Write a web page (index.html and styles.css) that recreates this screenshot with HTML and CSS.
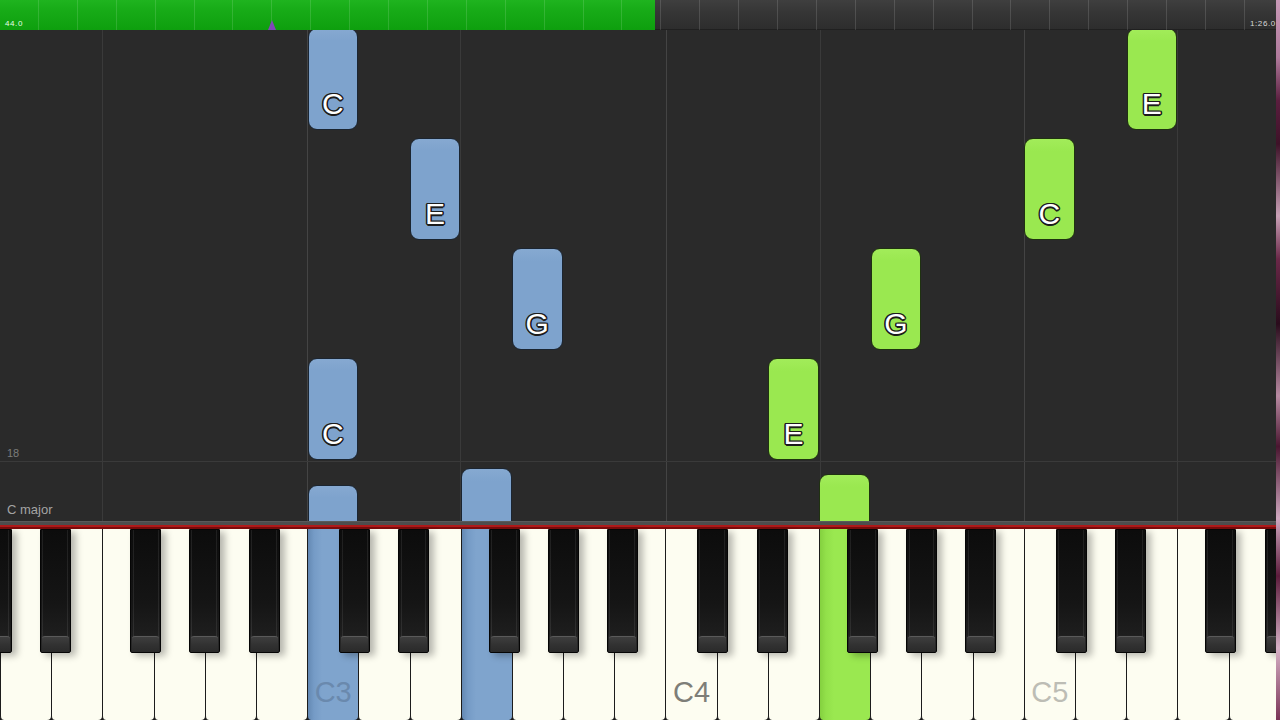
FILE: index.html
```html
<!DOCTYPE html>
<html lang="en">
<head>
<meta charset="utf-8">
<title>Piano roll</title>
<link rel="stylesheet" href="styles.css">
</head>
<body>
<div class="screen">
  <header class="timeline">
    <div class="progress"></div>
    <div class="rest"></div>
    <span class="time time-start">44.0</span>
    <span class="time time-end">1:26.0</span>
    <span class="marker"></span>
  </header>

  <main class="roll">
    <span class="vline" style="left:102px"></span>
    <span class="vline strong" style="left:307px"></span>
    <span class="vline" style="left:460px"></span>
    <span class="vline strong" style="left:666px"></span>
    <span class="vline" style="left:820px"></span>
    <span class="vline strong" style="left:1024px"></span>
    <span class="vline" style="left:1177px"></span>
    <span class="hline"></span>

    <div class="note blue" style="left:307.5px;top:-2px"><span class="note-label">C</span></div>
    <div class="note blue" style="left:409.8px;top:108px"><span class="note-label">E</span></div>
    <div class="note blue" style="left:512px;top:218px"><span class="note-label">G</span></div>
    <div class="note blue" style="left:307.5px;top:328px"><span class="note-label">C</span></div>
    <div class="note blue" style="left:307.5px;top:455px"></div>
    <div class="note blue" style="left:461px;top:438px"></div>

    <div class="note green" style="left:1126.6px;top:-2px"><span class="note-label">E</span></div>
    <div class="note green" style="left:1024.2px;top:108px"><span class="note-label">C</span></div>
    <div class="note green" style="left:870.6px;top:218px"><span class="note-label">G</span></div>
    <div class="note green" style="left:768.2px;top:328px"><span class="note-label">E</span></div>
    <div class="note green" style="left:819.4px;top:444px"></div>

    <span class="measure">18</span>
    <span class="key-name">C major</span>
  </main>

  <div class="divider"></div>

  <div class="keyboard">
    <div class="white"></div>
    <div class="white"></div>
    <div class="white"></div>
    <div class="white"></div>
    <div class="white"></div>
    <div class="white"></div>
    <div class="white hl-blue"><span class="key-label l-c3">C3</span></div>
    <div class="white"></div>
    <div class="white"></div>
    <div class="white hl-blue"></div>
    <div class="white"></div>
    <div class="white"></div>
    <div class="white"></div>
    <div class="white"><span class="key-label l-c4">C4</span></div>
    <div class="white"></div>
    <div class="white"></div>
    <div class="white hl-green"></div>
    <div class="white"></div>
    <div class="white"></div>
    <div class="white"></div>
    <div class="white"><span class="key-label l-c5">C5</span></div>
    <div class="white"></div>
    <div class="white"></div>
    <div class="white"></div>
    <div class="white"></div>

    <span class="black" style="left:-19.5px"></span>
    <span class="black" style="left:39.7px"></span>
    <span class="black" style="left:130.1px"></span>
    <span class="black" style="left:189.3px"></span>
    <span class="black" style="left:248.5px"></span>
    <span class="black" style="left:338.9px"></span>
    <span class="black" style="left:398.1px"></span>
    <span class="black" style="left:488.5px"></span>
    <span class="black" style="left:547.7px"></span>
    <span class="black" style="left:606.9px"></span>
    <span class="black" style="left:697.3px"></span>
    <span class="black" style="left:756.5px"></span>
    <span class="black" style="left:846.9px"></span>
    <span class="black" style="left:906.1px"></span>
    <span class="black" style="left:965.3px"></span>
    <span class="black" style="left:1055.7px"></span>
    <span class="black" style="left:1114.9px"></span>
    <span class="black" style="left:1205.3px"></span>
    <span class="black" style="left:1264.5px"></span>
  </div>

  <div class="edge"></div>
</div>
</body>
</html>
```

FILE: styles.css
```css
* { box-sizing: border-box; }

html, body {
  margin: 0;
  padding: 0;
}

body {
  background: #2a2a2a;
  font-family: "Liberation Sans", Arial, sans-serif;
  overflow: hidden;
}

.screen {
  position: relative;
  width: 1280px;
  height: 720px;
  display: flex;
  flex-direction: column;
  overflow: hidden;
  background: #2a2a2a;
}

/* ---------- timeline ---------- */
.timeline {
  position: relative;
  flex: none;
  height: 30px;
  display: flex;
}

.progress {
  width: 655px;
  background: linear-gradient(#1fb41f 0, #17ab17 35%, #0e9f0e 100%);
}

.rest {
  flex: 1;
  background: linear-gradient(#3f3f3f 0, #353535 45%, #2d2d2d 100%);
  border-bottom: 1px solid #202020;
}

.timeline::after {
  content: "";
  position: absolute;
  inset: 0;
  background: repeating-linear-gradient(90deg, transparent 0 37.9px, rgba(255, 255, 255, 0.13) 37.9px 38.9px);
  pointer-events: none;
}

.time {
  position: absolute;
  top: 19px;
  font-size: 8px;
  line-height: 9px;
  letter-spacing: 0.6px;
  z-index: 1;
}

.time-start {
  left: 5px;
  color: #e6ffe6;
}

.time-end {
  left: 1250px;
  color: #d8d8d8;
}

.marker {
  position: absolute;
  left: 268px;
  top: 20px;
  width: 0;
  height: 0;
  border-left: 4.5px solid transparent;
  border-right: 4.5px solid transparent;
  border-bottom: 10px solid #8048b8;
  z-index: 1;
}

/* ---------- piano roll ---------- */
.roll {
  position: relative;
  flex: none;
  height: 491px;
  background: #2a2a2a;
  overflow: hidden;
}

.vline {
  position: absolute;
  top: 0;
  bottom: 0;
  width: 1px;
  background: #3a3a3a;
}

.vline.strong {
  background: #444;
}

.hline {
  position: absolute;
  left: 0;
  right: 0;
  top: 431px;
  height: 1px;
  background: #3a3a3a;
}

.note {
  position: absolute;
  width: 50.5px;
  height: 102px;
  border-radius: 9px;
  border: 1px solid #18212c;
  display: flex;
  align-items: flex-end;
  justify-content: center;
  padding-bottom: 10px;
}

.note.blue {
  background: linear-gradient(#86a9d1 0, #7ea3cd 12px, #7ea3cd 100%);
  border-color: #1b2531;
}

.note.green {
  background: linear-gradient(#a2ec5a 0, #9ae850 12px, #9ae850 100%);
  border-color: #1f3210;
}

.note-label {
  font-size: 30px;
  line-height: 30px;
  color: #fff;
  text-shadow:
    -1.5px 0 #1c1c1c, 1.5px 0 #1c1c1c, 0 -1.5px #1c1c1c, 0 1.5px #1c1c1c,
    -1.1px -1.1px #1c1c1c, 1.1px -1.1px #1c1c1c, -1.1px 1.1px #1c1c1c, 1.1px 1.1px #1c1c1c;
}

.measure {
  position: absolute;
  left: 7px;
  top: 417px;
  font-size: 11px;
  line-height: 12px;
  color: #7c7c7c;
}

.key-name {
  position: absolute;
  left: 7px;
  top: 472px;
  font-size: 13px;
  line-height: 15px;
  color: #a4a4a4;
}

/* ---------- divider ---------- */
.divider {
  flex: none;
  height: 8px;
  background: linear-gradient(#5a5a5a 0 1px, #4d4d4d 1px 4px, #b01a1a 4px 6px, #7a0c0c 6px 8px);
}

/* ---------- keyboard ---------- */
.keyboard {
  position: relative;
  flex: 1;
  display: flex;
  background: #1b1b1b;
}

.white {
  flex: 0 0 51.2px;
  height: 100%;
  background: #fdfdf1;
  border-left: 1.5px solid #1c1c1c;
  border-radius: 0 0 4px 4px;
  display: flex;
  align-items: flex-end;
  justify-content: center;
  padding-bottom: 13px;
}

.white.hl-blue {
  background: linear-gradient(90deg, #6489b3 0, #759bc6 6px, #7fa4cd 14px, #7fa4cd 100%);
}

.white.hl-green {
  background: linear-gradient(90deg, #84d03f 0, #92e04a 6px, #9ae850 14px, #9ae850 100%);
}

.key-label {
  font-size: 29px;
  line-height: 29px;
}

.l-c3 { color: #6a89ad; }
.l-c4 { color: #7e7e78; }
.l-c5 { color: #bdbdb5; }

.black {
  position: absolute;
  top: 0;
  width: 31px;
  height: 124px;
  border: 1.5px solid #050505;
  border-radius: 0 0 2px 2px;
  background:
    linear-gradient(90deg, transparent 0 1.5px, rgba(255, 255, 255, 0.08) 1.5px 2.5px, transparent 2.5px calc(100% - 2.5px), rgba(255, 255, 255, 0.08) calc(100% - 2.5px) calc(100% - 1.5px), transparent calc(100% - 1.5px)),
    linear-gradient(#0c0c0c 0, #151515 60%, #1e1e1e 86%, #262626 88%);
  box-shadow: 5px 3px 7px rgba(0, 0, 0, 0.28);
}

.black::after {
  content: "";
  position: absolute;
  left: 1px;
  right: 1px;
  bottom: 0;
  height: 15px;
  border-top: 1px solid #5a5a5a;
  border-radius: 3px 3px 1px 1px;
  background: linear-gradient(#3e3e3e 0, #323232 50%, #2a2a2a 100%);
}

/* ---------- right edge (wallpaper behind window) ---------- */
.edge {
  position: absolute;
  top: 0;
  right: 0;
  width: 4px;
  height: 720px;
  background: linear-gradient(#c99ab8 0, #b07a9c 8%, #5a1e3e 14%, #3e1228 20%, #c9a0b6 30%, #6a2848 36%, #2a0c1c 45%, #b88aa2 55%, #4a1630 62%, #d0a8c0 72%, #5c1c3c 80%, #d6b0c6 90%, #7a3456 100%);
}
```
